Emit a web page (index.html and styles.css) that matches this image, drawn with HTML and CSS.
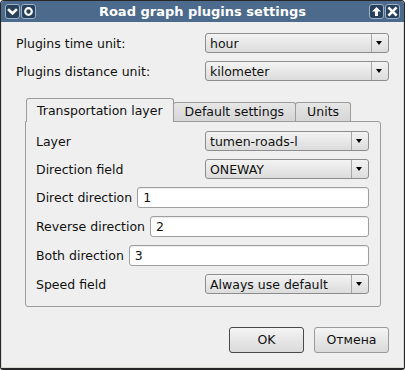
FILE: index.html
```html
<!DOCTYPE html>
<html>
<head>
<meta charset="utf-8">
<link rel="stylesheet" href="styles.css">
</head>
<body>
<div class="window">
  <div class="titlebar">
    <div class="tbtns">
      <span class="tbtn"><svg width="13" height="13" viewBox="0 0 13 13"><polyline points="3,5 6.5,8.5 10,5" fill="none" stroke="#fff" stroke-width="2.6" stroke-linecap="square"/></svg></span>
      <span class="tbtn"><svg width="13" height="13" viewBox="0 0 13 13"><circle cx="6.5" cy="6.5" r="3.3" fill="none" stroke="#fff" stroke-width="2.2"/></svg></span>
    </div>
    <div class="title">Road graph plugins settings</div>
    <div class="tbtns">
      <span class="tbtn"><svg width="13" height="13" viewBox="0 0 13 13"><path d="M6.5 2 L11 6.5 L8 6.5 L8 11 L5 11 L5 6.5 L2 6.5 Z" fill="#fff"/></svg></span>
      <span class="tbtn"><svg width="13" height="13" viewBox="0 0 13 13"><path d="M3.3 3.3 L9.7 9.7 M9.7 3.3 L3.3 9.7" stroke="#fff" stroke-width="2.6" stroke-linecap="square"/></svg></span>
    </div>
  </div>
  <div class="body">
    <div class="form">
      <div class="label">Plugins time unit:</div>
      <div class="combo"><span class="val">hour</span><span class="arrow"></span></div>
      <div class="label">Plugins distance unit:</div>
      <div class="combo"><span class="val">kilometer</span><span class="arrow"></span></div>
    </div>
    <div class="tabs">
      <div class="tabbar">
        <div class="tab active">Transportation layer</div>
        <div class="tab">Default settings</div>
        <div class="tab">Units</div>
      </div>
      <div class="pane">
        <div class="row">
          <div class="plabel">Layer</div>
          <div class="combo"><span class="val">tumen-roads-l</span><span class="arrow"></span></div>
        </div>
        <div class="row">
          <div class="plabel">Direction field</div>
          <div class="combo"><span class="val">ONEWAY</span><span class="arrow"></span></div>
        </div>
        <div class="row">
          <div class="ilabel">Direct direction</div>
          <div class="input">1</div>
        </div>
        <div class="row">
          <div class="ilabel">Reverse direction</div>
          <div class="input">2</div>
        </div>
        <div class="row">
          <div class="ilabel">Both direction</div>
          <div class="input">3</div>
        </div>
        <div class="row">
          <div class="plabel">Speed field</div>
          <div class="combo"><span class="val">Always use default</span><span class="arrow"></span></div>
        </div>
      </div>
    </div>
    <div class="buttons">
      <div class="btn default">OK</div>
      <div class="btn">Отмена</div>
    </div>
  </div>
</div>
</body>
</html>
```
FILE: styles.css
```css
html, body {
  margin: 0;
  padding: 0;
  background: #ffffff;
}
body {
  font-family: "DejaVu Sans", sans-serif;
  font-size: 12.5px;
  color: #111;
}
.window {
  width: 405px;
  height: 370px;
  box-sizing: border-box;
  border: 1px solid #262626;
  border-bottom-width: 2px;
  border-radius: 4px 4px 3px 3px;
  display: flex;
  flex-direction: column;
  background: #efefef;
  overflow: hidden;
}
.titlebar {
  height: 21px;
  flex: none;
  background: #4b6a8c;
  display: flex;
  align-items: center;
  padding: 0 4px 0 4px;
}
.tbtns {
  display: flex;
  gap: 1px;
}
.tbtn {
  width: 13px;
  height: 13px;
  border: 1px solid #9db1c6;
  border-radius: 3px;
  background: #27405b;
  display: flex;
}
.title {
  flex: 1;
  text-align: center;
  color: #fff;
  font-weight: bold;
  font-size: 13px;
}
.body {
  flex: 1;
  border: 1px solid #d9d9d3;
  border-top: none;
  padding: 11px 14px 0 14px;
  display: flex;
  flex-direction: column;
}
.form {
  display: grid;
  grid-template-columns: 189px 1fr;
  row-gap: 8px;
  align-items: center;
}
.combo {
  height: 20px;
  box-sizing: border-box;
  border: 1px solid #8d8d8d;
  border-radius: 3px;
  background: linear-gradient(#f3f3f3, #dcdcdc);
  display: flex;
  align-items: center;
}
.combo .val {
  flex: 1;
  padding-left: 4px;
  white-space: nowrap;
}
.combo .arrow {
  width: 16px;
  height: 18px;
  border-left: 1px solid #a6a6a6;
  position: relative;
}
.combo .arrow::after {
  content: "";
  position: absolute;
  left: 4px;
  top: 7px;
  border-left: 3.5px solid transparent;
  border-right: 3.5px solid transparent;
  border-top: 4px solid #000;
}
.tabs {
  margin: 17px 8px 0 9px;
}
.tabbar {
  display: flex;
  align-items: flex-end;
  padding-left: 1px;
}
.tab {
  height: 19px;
  box-sizing: border-box;
  border: 1px solid #9c9c9c;
  border-bottom: none;
  border-radius: 3px 3px 0 0;
  background: linear-gradient(#e6e6e6, #d5d5d5);
  padding: 1px 11px 0 11px;
  margin-left: -1px;
  white-space: nowrap;
}
.tab.active {
  height: 24px;
  margin-bottom: -1px;
  margin-left: 0;
  background: #efefef;
  padding: 4px 10px 0 10px;
  position: relative;
  z-index: 1;
}
.pane {
  border: 1px solid #9c9c9c;
  border-radius: 0 3px 3px 3px;
  padding: 9px 11px 12px 10px;
  display: flex;
  flex-direction: column;
  gap: 8px;
}
.row {
  display: flex;
  align-items: center;
}
.plabel {
  width: 169px;
  flex: none;
}
.row .combo {
  flex: 1;
}
.ilabel {
  flex: none;
  margin-right: 5px;
}
.input {
  flex: 1;
  height: 21px;
  box-sizing: border-box;
  border: 1px solid #9f9f9f;
  border-radius: 3px;
  background: #fff;
  box-shadow: inset 0 1px 1px rgba(0,0,0,0.08);
  padding-left: 5px;
  line-height: 19px;
}
.buttons {
  margin-top: 20px;
  display: flex;
  justify-content: flex-end;
  gap: 10px;
}
.btn {
  width: 75px;
  height: 26px;
  box-sizing: border-box;
  border: 1px solid #9a9a9a;
  border-radius: 3px;
  background: linear-gradient(#f4f4f4, #dadada);
  text-align: center;
  line-height: 23px;
}
.btn.default {
  border-color: #4a4a4a;
}
```
